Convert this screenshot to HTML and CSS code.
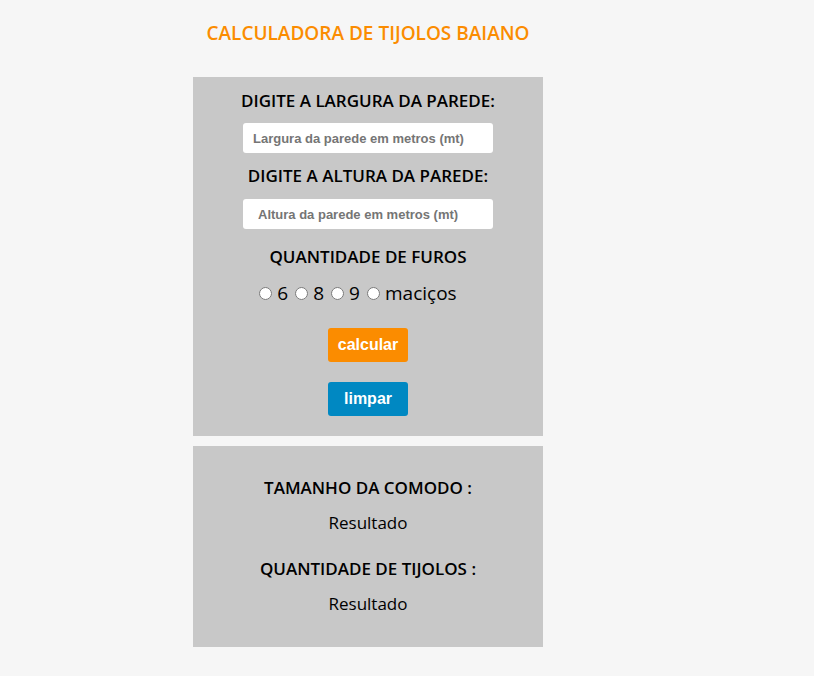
FILE: index.html
```html
<!DOCTYPE html>
<html lang="pt-BR">
<head>
<meta charset="utf-8">
<title>Calculadora de Tijolos Baiano</title>
<link rel="stylesheet" href="styles.css">
</head>
<body>
<main class="wrap">
  <h1 class="title">CALCULADORA DE TIJOLOS BAIANO</h1>
  <section class="panel form">
    <h2 class="label">DIGITE A LARGURA DA PAREDE:</h2>
    <input class="field field-a" type="text" placeholder="Largura da parede em metros (mt)">
    <h2 class="label label-2">DIGITE A ALTURA DA PAREDE:</h2>
    <input class="field field-b" type="text" placeholder="Altura da parede em metros (mt)">
    <h2 class="label label-3">QUANTIDADE DE FUROS</h2>
    <div class="radios">
      <input type="radio" name="furos" id="f6"><label for="f6">6</label>
      <input type="radio" name="furos" id="f8"><label for="f8">8</label>
      <input type="radio" name="furos" id="f9"><label for="f9">9</label>
      <input type="radio" name="furos" id="fm"><label for="fm">maciços</label>
    </div>
    <button class="btn btn-calc">calcular</button>
    <button class="btn btn-clear">limpar</button>
  </section>
  <section class="panel result">
    <h2 class="label">TAMANHO DA COMODO :</h2>
    <p class="value">Resultado</p>
    <h2 class="label label-r2">QUANTIDADE DE TIJOLOS :</h2>
    <p class="value">Resultado</p>
  </section>
</main>
</body>
</html>
```
FILE: styles.css
```css
html, body {
  margin: 0;
  padding: 0;
  background: #f6f6f6;
}
body {
  font-family: "Open Sans", "DejaVu Sans", sans-serif;
  color: #000;
}
.wrap {
  width: 350px;
  margin-left: 193px;
  display: flex;
  flex-direction: column;
}
.title {
  margin: 20px 0 0;
  height: 57px;
  font-size: 19px;
  line-height: 26px;
  font-weight: 600;
  color: #fb8c00;
  text-align: center;
}
.panel {
  background: #c8c8c8;
  display: flex;
  flex-direction: column;
  align-items: center;
}
.form {
  padding: 12px 0 20px;
}
.result {
  margin-top: 10px;
  padding: 30px 0 31px;
}
.label {
  margin: 0;
  font-size: 17px;
  line-height: 24px;
  font-weight: 600;
}
.label-2 { margin-top: 11px; }
.label-3 { margin-top: 16px; }
.label-r2 { margin-top: 22px; }
.field {
  box-sizing: border-box;
  width: 250px;
  height: 30px;
  margin-top: 10px;
  border: none;
  border-radius: 3px;
  background: #fff;
  font-family: "Liberation Sans", Arial, sans-serif;
  font-weight: 700;
  font-size: 13px;
  outline: none;
}
.field::placeholder { color: #757575; }
.field-a { padding-left: 10px; }
.field-b { margin-top: 11px; padding-left: 15px; }
.radios {
  margin-top: 12px;
  padding-right: 20px;
  height: 24px;
  display: flex;
  align-items: center;
  font-size: 19px;
  line-height: 24px;
}
.radios input {
  margin: 0 5px 0 7px;
  width: 13px;
  height: 13px;
}
.radios input:first-child { margin-left: 0; }
.btn {
  width: 80px;
  height: 34px;
  border: none;
  border-radius: 3px;
  color: #fff;
  font-family: "Liberation Sans", Arial, sans-serif;
  font-weight: 700;
  font-size: 16px;
  padding: 0;
}
.btn-calc { margin-top: 23px; background: #fb8c00; }
.btn-clear { margin-top: 20px; background: #0088c2; }
.value {
  margin: 11px 0 0;
  font-size: 17px;
  line-height: 24px;
}
```
